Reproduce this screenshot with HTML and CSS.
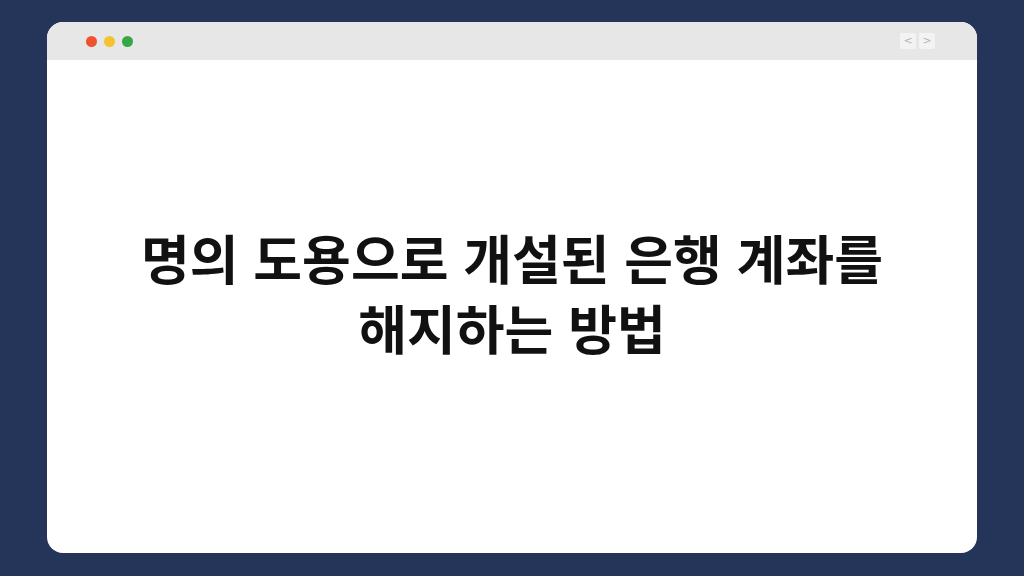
FILE: index.html
```html
<!DOCTYPE html>
<html lang="ko">
<head>
<meta charset="utf-8">
<link rel="stylesheet" href="styles.css">
</head>
<body>
<div class="stage">
  <div class="window">
    <div class="titlebar">
      <div class="dots">
        <span class="dot red"></span>
        <span class="dot yellow"></span>
        <span class="dot green"></span>
      </div>
      <div class="navs">
        <span class="nav">&lt;</span>
        <span class="nav">&gt;</span>
      </div>
    </div>
    <div class="content">
      <h1 class="title">명의 도용으로 개설된 은행 계좌를<br>해지하는 방법</h1>
    </div>
  </div>
</div>
</body>
</html>
```
FILE: styles.css
```css
html, body {
  margin: 0;
  padding: 0;
}
body {
  width: 1024px;
  height: 576px;
  background: #243559;
  overflow: hidden;
}
.stage {
  padding: 22px 47px 23px 47px;
  height: 576px;
  box-sizing: border-box;
}
.window {
  height: 100%;
  background: #ffffff;
  border-radius: 16px;
  overflow: hidden;
  display: flex;
  flex-direction: column;
}
.titlebar {
  height: 38px;
  background: #e7e7e7;
  display: flex;
  align-items: center;
  justify-content: space-between;
  padding: 0 42px 0 39px;
  flex-shrink: 0;
}
.dots {
  display: flex;
  gap: 7px;
}
.dot {
  width: 11px;
  height: 11px;
  border-radius: 50%;
  display: block;
}
.red { background: #f0512f; }
.yellow { background: #f6c232; }
.green { background: #35a746; }
.navs {
  display: flex;
  gap: 3px;
}
.nav {
  width: 16px;
  height: 16px;
  background: #f3f3f3;
  border-radius: 2px;
  color: #b4b4b4;
  font: 11px/16px "DejaVu Sans", sans-serif;
  text-align: center;
}
.content {
  flex: 1;
  display: flex;
  align-items: center;
  justify-content: center;
  padding-bottom: 30px;
}
.title {
  margin: 0;
  font-family: "Noto Sans CJK KR", sans-serif;
  font-weight: 700;
  font-size: 53px;
  line-height: 70px;
  color: #111111;
  text-align: center;
}
```
